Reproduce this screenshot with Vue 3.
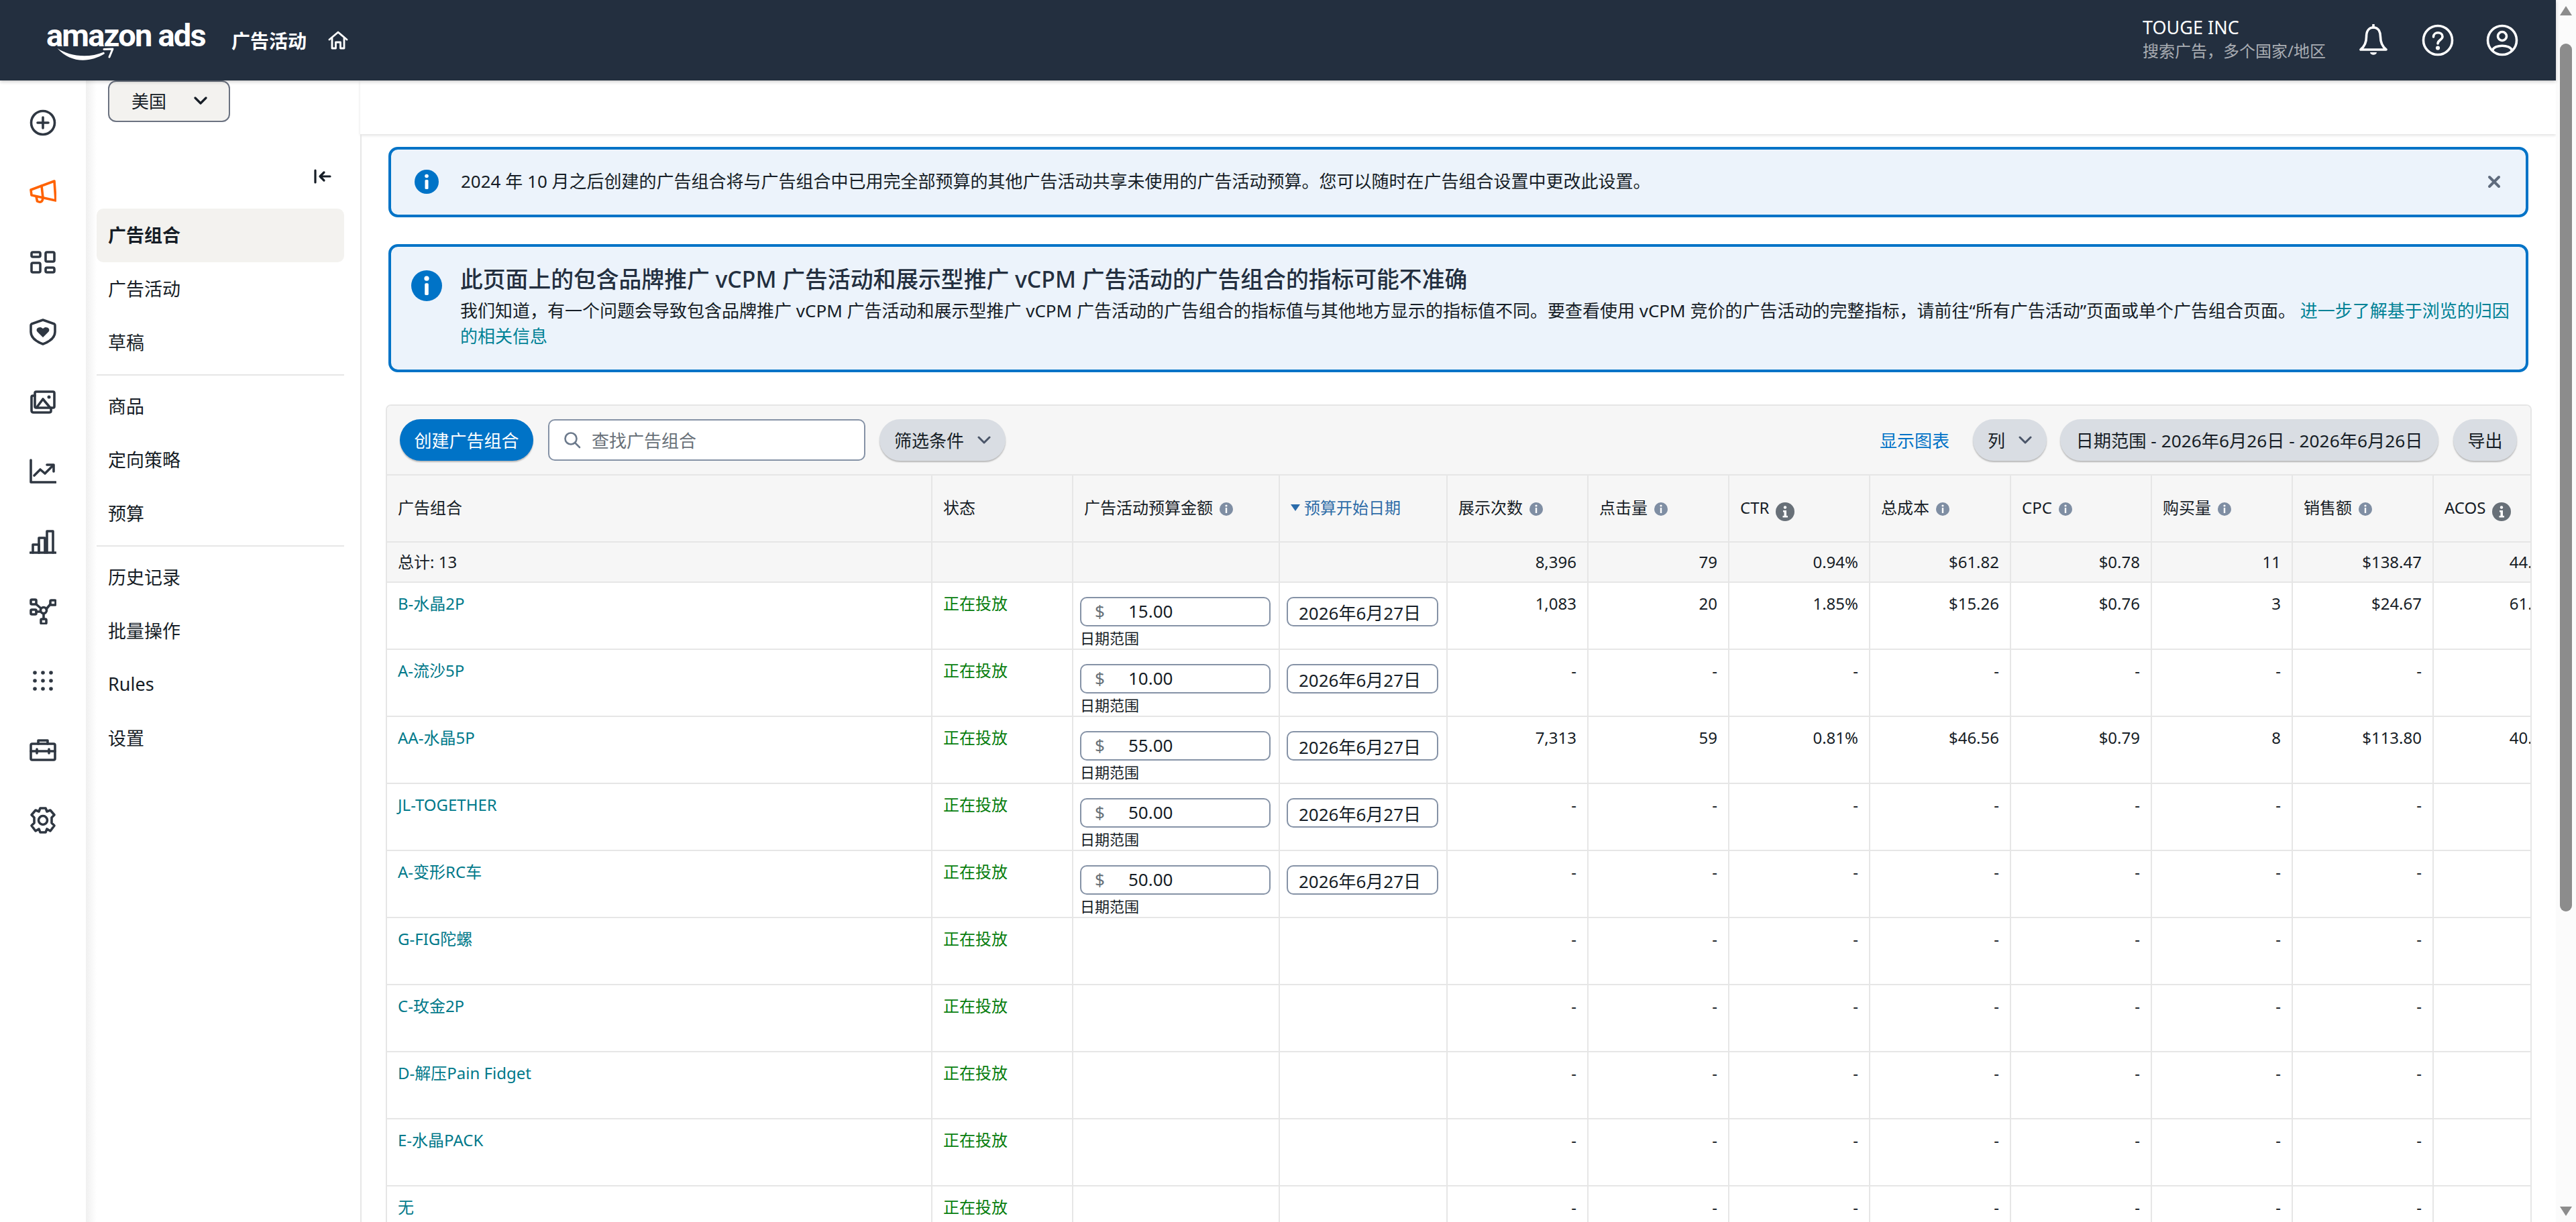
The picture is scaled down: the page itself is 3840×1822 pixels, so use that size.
<template>
  <div class="page">
    <div class="window">
      <header class="topbar">
        <div class="logo">
          <span class="logo-text">amazon ads</span>
          <svg class="smile" viewBox="0 0 85 21" fill="#fff">
            <path d="M0.500 1C17 12 45 17 70 6.500L71 9C48 23 20 23 0.500 1Z" />
            <path d="M70 2.500L83 2L78 14" fill="none" stroke="#fff" stroke-width="3" stroke-linecap="round" stroke-linejoin="round" />
          </svg>
        </div>
        <span class="top-title">广告活动</span>
        <svg class="home" viewBox="0 0 30 28" fill="none" stroke="#fff" stroke-width="2.8" stroke-linejoin="round" stroke-linecap="round">
          <path d="M2 13L15 2L28 13" />
          <path d="M6 11V26H11.500V17H18.500V26H24V11" />
        </svg>
        <div class="account">
          <div class="account-name">TOUGE INC</div>
          <div class="account-sub">搜索广告，多个国家/地区</div>
        </div>
        <div class="top-icons">
          <svg viewBox="0 0 48 48" fill="none" stroke="#fff" stroke-width="3.6" stroke-linejoin="round">
            <path d="M24 5C16 5 13.500 12 13.500 19C13.500 28 11 33 5 38H43C37 33 34.500 28 34.500 19C34.500 12 32 5 24 5Z" />
            <path d="M24 1V5" stroke-linecap="round" />
            <path d="M19 42H29C28.500 47 19.500 47 19 42Z" fill="#fff" stroke="none" />
          </svg>
          <svg viewBox="0 0 48 48" fill="none" stroke="#fff" stroke-width="3.6" stroke-linecap="round">
            <circle cx="24" cy="24" r="21.500" />
            <path d="M17.500 19C17.500 10.500 31 11 31 18.500C31 23.500 24 23.500 24 29" />
            <circle cx="24" cy="35.500" r="1.300" fill="#fff" />
          </svg>
          <svg viewBox="0 0 48 48" fill="none" stroke="#fff" stroke-width="3.6">
            <circle cx="24" cy="24" r="21.500" />
            <circle cx="24" cy="18" r="6.500" />
            <path d="M9.500 39C12 30 36 30 38.500 39" />
          </svg>
        </div>
      </header>

      <div class="body">
        <nav class="rail">
          <div class="rail-item">
            <svg viewBox="0 0 40 40"><circle cx="20" cy="20" r="17.500" /><path d="M20 12V28M12 20H28" /></svg>
          </div>
          <div class="rail-item active">
            <svg viewBox="0 0 40 40"><path d="M2 16L37 3L39 32L3 24Z" /><path d="M18 10L20 28" /><path d="M10 26L11.500 33Q19 37 20 28" /></svg>
          </div>
          <div class="rail-item">
            <svg viewBox="0 0 40 40"><rect x="3" y="5" width="13" height="7" rx="2" /><rect x="24" y="5" width="13" height="14" rx="2" /><rect x="3" y="21" width="13" height="14" rx="2" /><rect x="24" y="28" width="13" height="7" rx="2" /></svg>
          </div>
          <div class="rail-item">
            <svg viewBox="0 0 40 40"><path d="M20 2L37 8Q38 8.500 38 10V20C38 29 28 35 20 38C12 35 2 29 2 20V10Q2 8.500 3 8Z" /><path d="M20 28L11.500 19.500C8 14 16 10.500 20 15C24 10.500 32 14 28.500 19.500Z" class="solid" /></svg>
          </div>
          <div class="rail-item">
            <svg viewBox="0 0 40 40"><rect x="8" y="5" width="29" height="24" rx="2" /><path d="M8 11H5Q3 11 3 13V33Q3 36 6 36H29Q32 36 32 34V29" /><path d="M11 28L20 16L30 28" /><circle cx="29" cy="13" r="2.500" class="solid" /></svg>
          </div>
          <div class="rail-item">
            <svg viewBox="0 0 40 40"><path d="M2 3V36H39" /><path d="M7 26L16 17L23 23L35 11" /><path d="M26 10H36V20" /></svg>
          </div>
          <div class="rail-item">
            <svg viewBox="0 0 40 40"><path d="M1 37H39" /><path d="M5 37V25H14V37" /><path d="M14 37V15H23V37" /><path d="M26 37V5H35V37" /></svg>
          </div>
          <div class="rail-item">
            <svg viewBox="0 0 40 40"><rect x="2" y="3" width="8" height="7" rx="1.500" /><rect x="31" y="4" width="8" height="7" rx="1.500" /><rect x="2" y="18" width="8" height="7" rx="1.500" /><rect x="17" y="32" width="8" height="7" rx="1.500" /><circle cx="21" cy="19" r="4.500" /><path d="M10 10L17 16M25 17L31 10M10 21H16M21 24V32" /></svg>
          </div>
          <div class="rail-item">
            <svg viewBox="0 0 40 40"><g class="solid"><circle cx="8" cy="8" r="2.800" /><circle cx="20" cy="8" r="2.800" /><circle cx="32" cy="8" r="2.800" /><circle cx="8" cy="20" r="2.800" /><circle cx="20" cy="20" r="2.800" /><circle cx="32" cy="20" r="2.800" /><circle cx="8" cy="32" r="2.800" /><circle cx="20" cy="32" r="2.800" /><circle cx="32" cy="32" r="2.800" /></g></svg>
          </div>
          <div class="rail-item">
            <svg viewBox="0 0 40 40"><rect x="2" y="10" width="36" height="24" rx="2" /><path d="M13 10V5H27V10" /><path d="M2 21H38" /><path d="M11 18V24M29 18V24" /></svg>
          </div>
          <div class="rail-item">
            <svg viewBox="0 0 40 40"><path d="M16 2H24L26 7L31 5L37 12L33 16V24L37 28L31 36L26 33L24 38H16L14 33L9 36L3 28L7 24V16L3 12L9 5L14 7Z" /><circle cx="20" cy="20" r="6.500" /></svg>
          </div>
        </nav>

        <aside class="sidebar">
          <button class="country">美国<svg viewBox="0 0 20 12" fill="none" stroke="#161d26" stroke-width="3.200" stroke-linecap="round" stroke-linejoin="round"><path d="M2 2L10 10L18 2" /></svg></button>
          <div class="collapse">
            <svg viewBox="0 0 26 22" fill="none" stroke="#161d26" stroke-width="3.200" stroke-linecap="round" stroke-linejoin="round"><path d="M2 2V20" /><path d="M24 11H9M15 5L9 11L15 17" /></svg>
          </div>
          <template v-for="(group, i) in navGroups" :key="i">
            <div v-if="i" class="nav-line"></div>
            <a v-for="item in group" :key="item" class="nav-item" :class="{ current: item === '广告组合' }">{{ item }}</a>
          </template>
        </aside>

        <main class="main">
          <div class="subbar"></div>
          <div class="content">
            <div class="banner small">
              <svg class="banner-icon" viewBox="0 0 36 36"><circle cx="18" cy="18" r="18" fill="#0073c7" /><circle cx="18" cy="9.500" r="2.800" fill="#fff" /><rect x="15.500" y="15" width="5" height="14" rx="1.500" fill="#fff" /></svg>
              <p>2024 年 10 月之后创建的广告组合将与广告组合中已用完全部预算的其他广告活动共享未使用的广告活动预算。您可以随时在广告组合设置中更改此设置。</p>
              <svg class="close" viewBox="0 0 20 20" fill="none" stroke="#5f6b7d" stroke-width="4" stroke-linecap="round"><path d="M3 3L17 17M17 3L3 17" /></svg>
            </div>

            <div class="banner large">
              <svg class="banner-icon big" viewBox="0 0 36 36"><circle cx="18" cy="18" r="18" fill="#0073c7" /><circle cx="18" cy="9.500" r="2.800" fill="#fff" /><rect x="15.800" y="15" width="4.400" height="14" rx="1.500" fill="#fff" /></svg>
              <div class="banner-text">
                <h3>此页面上的包含品牌推广 vCPM 广告活动和展示型推广 vCPM 广告活动的广告组合的指标可能不准确</h3>
                <p>我们知道，有一个问题会导致包含品牌推广 vCPM 广告活动和展示型推广 vCPM 广告活动的广告组合的指标值与其他地方显示的指标值不同。要查看使用 vCPM 竞价的广告活动的完整指标，请前往“所有广告活动”页面或单个广告组合页面。 <a>进一步了解基于浏览的归因的相关信息</a></p>
              </div>
            </div>

            <section class="panel">
              <div class="toolbar">
                <button class="btn primary">创建广告组合</button>
                <div class="search">
                  <svg viewBox="0 0 26 26" fill="none" stroke="#6c7a8c" stroke-width="2.600" stroke-linecap="round"><circle cx="11" cy="11" r="8.500" /><path d="M17 17L24 24" /></svg>
                  <span>查找广告组合</span>
                </div>
                <button class="btn filter">筛选条件<svg class="chev" viewBox="0 0 20 12" fill="none" stroke="#4a5568" stroke-width="3" stroke-linecap="round" stroke-linejoin="round"><path d="M2 2L10 10L18 2" /></svg></button>
                <a class="chart-link">显示图表</a>
                <button class="btn cols">列<svg class="chev" viewBox="0 0 20 12" fill="none" stroke="#4a5568" stroke-width="3" stroke-linecap="round" stroke-linejoin="round"><path d="M2 2L10 10L18 2" /></svg></button>
                <button class="btn range">日期范围 - 2026年6月26日 - 2026年6月26日</button>
                <button class="btn export">导出</button>
              </div>

              <div class="grid-row head">
                <div v-for="col in columns" :key="col.label" class="cell" :class="{ sorted: col.sorted }">
                  <svg v-if="col.sorted" class="sort" viewBox="0 0 14 12"><path d="M0 1H14L7 11Z" fill="#2b6cab" /></svg>
                  <span>{{ col.label }}</span>
                  <svg v-if="col.info" class="info" viewBox="0 0 20 20"><circle cx="10" cy="10" r="10" fill="#7f8ea3" /><circle cx="10" cy="5" r="1.600" fill="#fff" /><rect x="8.800" y="8" width="2.400" height="8" fill="#fff" /></svg>
                  <svg v-if="col.darkInfo" class="info dark" viewBox="0 0 28 28"><circle cx="14" cy="14" r="14" fill="#687078" /><circle cx="14" cy="7.500" r="2.200" fill="#fff" /><path d="M11 12H16V20H18V22.500H10.500V20H12.500V14.500H11Z" fill="#fff" /></svg>
                </div>
              </div>

              <div class="grid-row total">
                <div class="cell">总计: 13</div>
                <div class="cell"></div>
                <div class="cell"></div>
                <div class="cell"></div>
                <div v-for="(val, i) in totals" :key="i" class="cell num">{{ val }}</div>
              </div>

              <div v-for="row in rows" :key="row.name" class="grid-row data">
                <div class="cell"><a class="link">{{ row.name }}</a></div>
                <div class="cell status">正在投放</div>
                <div class="cell field">
                  <template v-if="row.budget">
                    <div class="input money"><span class="dollar">$</span>{{ row.budget }}</div>
                    <div class="field-label">日期范围</div>
                  </template>
                </div>
                <div class="cell field">
                  <div v-if="row.budget" class="input date">2026年6月27日</div>
                </div>
                <div v-for="(val, i) in row.stats || blank" :key="i" class="cell num">{{ val }}</div>
              </div>
            </section>
          </div>
        </main>
      </div>
    </div>

    <div class="scrollbar">
      <div class="arrow up"></div>
      <div class="thumb"></div>
      <div class="arrow down"></div>
    </div>
  </div>
</template>

<script setup>
const navGroups = [
  ['广告组合', '广告活动', '草稿'],
  ['商品', '定向策略', '预算'],
  ['历史记录', '批量操作', 'Rules', '设置']
]

const columns = [
  { label: '广告组合' },
  { label: '状态' },
  { label: '广告活动预算金额', info: true },
  { label: '预算开始日期', sorted: true },
  { label: '展示次数', info: true },
  { label: '点击量', info: true },
  { label: 'CTR', darkInfo: true },
  { label: '总成本', info: true },
  { label: 'CPC', info: true },
  { label: '购买量', info: true },
  { label: '销售额', info: true },
  { label: 'ACOS', darkInfo: true }
]

const totals = ['8,396', '79', '0.94%', '$61.82', '$0.78', '11', '$138.47', '44.65%']
const blank = ['-', '-', '-', '-', '-', '-', '-', '-']

const rows = [
  { name: 'B-水晶2P', budget: '15.00', stats: ['1,083', '20', '1.85%', '$15.26', '$0.76', '3', '$24.67', '61.86%'] },
  { name: 'A-流沙5P', budget: '10.00' },
  { name: 'AA-水晶5P', budget: '55.00', stats: ['7,313', '59', '0.81%', '$46.56', '$0.79', '8', '$113.80', '40.91%'] },
  { name: 'JL-TOGETHER', budget: '50.00' },
  { name: 'A-变形RC车', budget: '50.00' },
  { name: 'G-FIG陀螺' },
  { name: 'C-玫金2P' },
  { name: 'D-解压Pain Fidget' },
  { name: 'E-水晶PACK' },
  { name: '无' }
]
</script>

<style>
html, body {
  margin: 0;
  overflow: hidden;
  background: #fff;
}
</style>

<style scoped>
* {
  box-sizing: border-box;
}

.page {
  display: flex;
  width: 3840px;
  height: 1822px;
  overflow: hidden;
  font-family: "Noto Sans", "Noto Sans CJK SC", sans-serif;
  font-size: 24px;
  color: #161d26;
}

.window {
  width: 3810px;
  display: flex;
  flex-direction: column;
}

.topbar {
  position: relative;
  z-index: 2;
  height: 120px;
  flex: none;
  display: flex;
  align-items: center;
  background: #232f3f;
  color: #fff;
  box-shadow: 0 2px 5px rgba(0, 0, 0, 0.2);
}

.logo {
  align-self: flex-start;
  margin: 31px 0 0 69px;
  width: 231px;
  display: flex;
  flex-direction: column;
}

.logo-text {
  font-family: "Roboto", sans-serif;
  font-weight: 700;
  font-size: 47px;
  line-height: 44px;
  letter-spacing: -1.8px;
  white-space: nowrap;
}

.smile {
  width: 85px;
  height: 21px;
  margin: -4px 0 0 16px;
}

.top-title {
  margin-left: 45px;
  font-size: 28px;
  font-weight: 700;
}

.home {
  width: 30px;
  height: 28px;
  margin-left: 32px;
}

.account {
  margin-left: auto;
  margin-right: 2px;
  padding-bottom: 4px;
}

.account-name {
  font-size: 27px;
  line-height: 36px;
}

.account-sub {
  font-size: 24px;
  line-height: 34px;
  color: #a9adb3;
}

.top-icons {
  display: flex;
  gap: 48px;
  margin-left: 45px;
  margin-right: 56px;
}

.top-icons svg {
  width: 48px;
  height: 48px;
}

.body {
  flex: 1;
  display: flex;
  min-height: 0;
}

.rail {
  width: 128px;
  flex: none;
  padding-top: 11px;
  background: #fff;
}

.rail-item {
  height: 104px;
  display: flex;
  align-items: center;
  justify-content: center;
  color: #2f3742;
}

.rail-item.active {
  color: #ff6200;
}

.rail-item svg {
  width: 40px;
  height: 40px;
  fill: none;
  stroke: currentColor;
  stroke-width: 3.600;
  stroke-linejoin: round;
  stroke-linecap: round;
}

.rail-item .solid {
  fill: currentColor;
  stroke: none;
}

.sidebar {
  width: 409px;
  flex: none;
  padding: 0 24px 0 16px;
  background: linear-gradient(to right, #f0f0f0, #fff 16px);
  display: flex;
  flex-direction: column;
}

.country {
  width: 182px;
  height: 62px;
  margin-left: 17px;
  padding: 0 32px 3px 33px;
  display: flex;
  align-items: center;
  justify-content: space-between;
  background: #f3f2ef;
  border: 2px solid #6b7280;
  border-radius: 12px;
  font: inherit;
  font-size: 26px;
  color: #161d26;
}

.country svg {
  width: 20px;
  height: 12px;
}

.collapse {
  height: 129px;
  display: flex;
  align-items: center;
  justify-content: flex-end;
  padding-right: 19px;
  padding-top: 33px;
}

.collapse svg {
  width: 26px;
  height: 22px;
}

.nav-item {
  height: 80px;
  flex: none;
  display: flex;
  align-items: center;
  padding: 0 0 3px 17px;
  border-radius: 10px;
  font-size: 27px;
}

.nav-item.current {
  background: #f3f2ef;
  font-weight: 700;
}

.nav-line {
  height: 2px;
  flex: none;
  margin: 7px 0 6px;
  background: #e6e6e6;
}

.main {
  flex: 1;
  min-width: 0;
  display: flex;
  flex-direction: column;
}

.subbar {
  height: 80px;
  flex: none;
  box-shadow: 0 2px 4px rgba(0, 0, 0, 0.12);
}

.content {
  flex: 1;
  min-height: 0;
  overflow: hidden;
  padding: 19px 36px 0 36px;
  border-left: 2px solid #e6e6e6;
}

.banner {
  margin: 0 5px 0 4px;
  display: flex;
  background: #ecf3fb;
  border: 4px solid #0073c7;
  border-radius: 14px;
  font-size: 26px;
}

.banner p {
  margin: 0;
}

.banner.small {
  height: 105px;
  align-items: center;
  padding: 0 37px 2px 35px;
}

.banner.small p {
  flex: 1;
  padding-bottom: 3px;
}

.banner-icon {
  width: 36px;
  height: 36px;
  flex: none;
  margin-right: 33px;
}

.banner-icon.big {
  width: 46px;
  height: 46px;
  margin: 10px 27px 0 0;
}

.close {
  width: 20px;
  height: 20px;
}

.banner.large {
  height: 191px;
  margin-top: 40px;
  padding: 25px 20px 0 30px;
}

.banner h3 {
  margin: 0 0 5px;
  font-size: 33.800px;
  font-weight: 500;
  line-height: 46px;
  color: #232f3f;
}

.banner-text p {
  line-height: 38px;
}

.banner a {
  color: #008296;
}

.panel {
  margin-top: 48px;
  border: 2px solid #e6e6e6;
  border-bottom: 0;
  border-radius: 8px 8px 0 0;
  overflow: hidden;
}

.toolbar {
  height: 104px;
  display: flex;
  align-items: center;
  padding: 0 20px 0 19px;
  background: #f6f6f6;
  border-bottom: 2px solid #e6e6e6;
  font-size: 26px;
}

.btn {
  height: 62px;
  padding: 0;
  display: flex;
  align-items: center;
  justify-content: center;
  border: 0;
  border-radius: 31px;
  background: #d9dde3;
  box-shadow: 0 2px 2px rgba(0, 0, 0, 0.25);
  font: inherit;
  color: #161d26;
  white-space: nowrap;
}

.primary {
  width: 199px;
  background: #0073c7;
  color: #fff;
}

.search {
  width: 473px;
  height: 62px;
  margin-left: 22px;
  padding-left: 21px;
  display: flex;
  align-items: center;
  gap: 16px;
  background: #fff;
  border: 2px solid #8592a6;
  border-radius: 10px;
  color: #687078;
}

.search svg {
  width: 26px;
  height: 26px;
}

.filter {
  width: 188px;
  margin-left: 21px;
  gap: 20px;
}

.chev {
  width: 20px;
  height: 12px;
}

.chart-link {
  margin-left: auto;
  color: #0073c7;
}

.cols {
  width: 110px;
  margin-left: 35px;
  gap: 20px;
}

.range {
  width: 564px;
  margin-left: 20px;
  font-size: 26.250px;
}

.export {
  width: 95px;
  margin-left: 22px;
}

.grid-row {
  display: grid;
  grid-template-columns: 813px 210px 308px 250px repeat(7, 210px) 212px;
  width: 3264px;
  border-bottom: 2px solid #e6e6e6;
}

.cell {
  padding: 14px 16px 0;
  line-height: 34px;
  border-right: 2px solid #e6e6e6;
  white-space: nowrap;
}

.head {
  height: 100px;
  background: #f6f6f6;
}

.head .cell {
  padding: 0 16px 3px;
  display: flex;
  align-items: center;
}

.head .sorted {
  color: #2f6da8;
}

.sort {
  width: 14px;
  height: 12px;
  margin-right: 6px;
}

.info {
  width: 20px;
  height: 20px;
  margin-left: 10px;
  margin-top: 4px;
}

.info.dark {
  width: 28px;
  height: 28px;
  margin-top: 12px;
}

.total {
  height: 60px;
  background: #f6f6f6;
}

.total .cell {
  padding-top: 12px;
}

.data {
  height: 100px;
  background: #fff;
}

.num {
  text-align: right;
  padding-right: 16px;
}

.link {
  color: #00798a;
}

.status {
  color: #067d0d;
}

.cell.field {
  padding: 21px 10px 0;
}

.input {
  height: 44px;
  display: flex;
  align-items: center;
  background: #fff;
  border: 2px solid #8592a6;
  border-radius: 10px;
  font-size: 26px;
  line-height: 1;
}

.money {
  width: 284px;
  padding: 0 0 3px 20px;
}

.dollar {
  width: 50px;
  color: #687078;
}

.date {
  width: 226px;
  padding: 4px 0 0 16px;
}

.field-label {
  margin-top: 4px;
  font-size: 22px;
  line-height: 26px;
}

.scrollbar {
  position: relative;
  width: 30px;
  flex: none;
  background: #fbfbfb;
}

.thumb {
  position: absolute;
  left: 6px;
  top: 65px;
  width: 18px;
  height: 1294px;
  border-radius: 9px;
  background: #8c8c8c;
}

.arrow {
  position: absolute;
  left: 6px;
  width: 0;
  height: 0;
  border-left: 9px solid transparent;
  border-right: 9px solid transparent;
}

.arrow.up {
  top: 9px;
  border-bottom: 14px solid #8c8c8c;
}

.arrow.down {
  bottom: 9px;
  border-top: 14px solid #8c8c8c;
}
</style>
